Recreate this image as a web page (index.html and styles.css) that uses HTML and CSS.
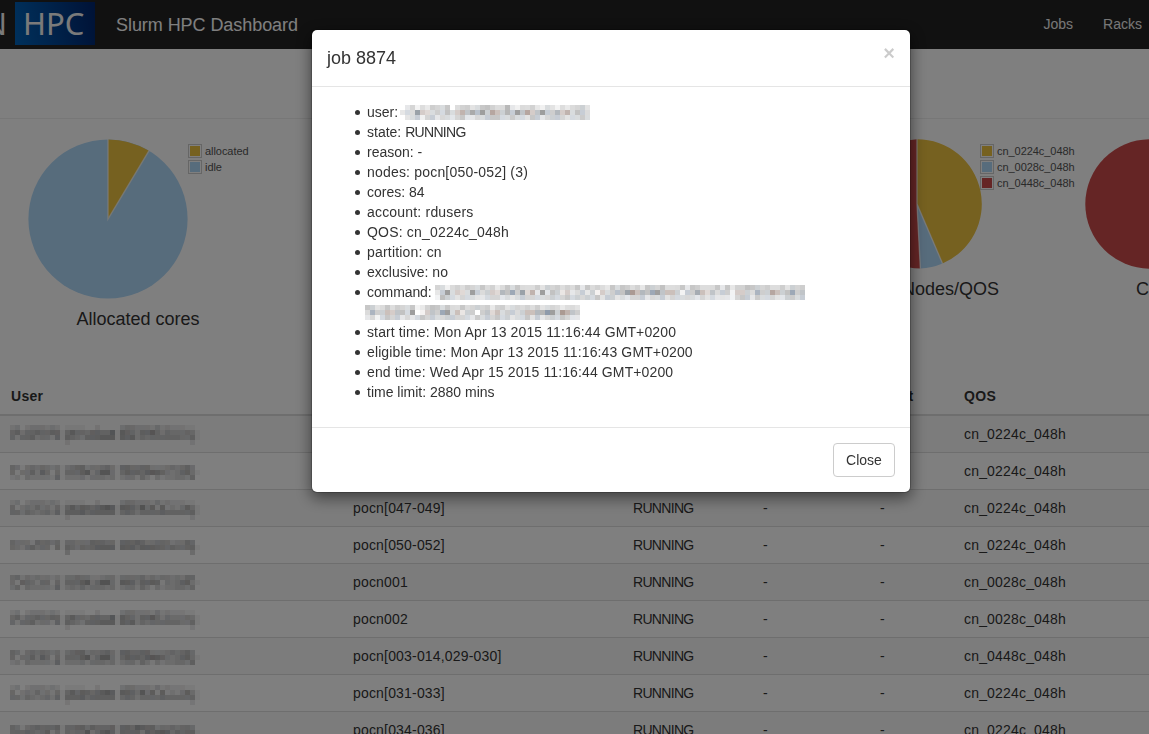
FILE: index.html
```html
<!DOCTYPE html>
<html lang="en">
<head>
<meta charset="utf-8">
<title>Slurm HPC Dashboard</title>
<link rel="stylesheet" href="styles.css">
</head>
<body>
<nav class="navbar">
  <div class="logo"><span class="logo-lead">N</span><span class="logo-box">HPC</span></div>
  <span class="brand">Slurm HPC Dashboard</span>
  <div class="links"><a>Jobs</a><a>Racks</a></div>
</nav>
<div class="toolbar"></div>
<section class="charts">
  <div class="chart chart-cores">
    <div class="plot">
      <svg width="160" height="160" viewBox="-80 -80 160 160">
        <circle r="79.6" fill="#afd8f8"/>
        <path d="M0 0V-79.6A79.6 79.6 0 0 1 41 -68.2Z" fill="#edc240"/>
        <path d="M0 -80V0L41.2 -68.6" class="slice-line"/>
      </svg>
      <ul class="legend">
        <li><i class="swatch yellow"></i>allocated</li>
        <li><i class="swatch blue"></i>idle</li>
      </ul>
    </div>
    <h4>Allocated cores</h4>
  </div>
  <div class="chart chart-nodes">
    <div class="plot">
      <svg width="130" height="130" viewBox="-65 -65 130 130">
        <path d="M0 0L3.4 64.6A64.7 64.7 0 0 1 0 -64.7Z" fill="#cb4b4b"/>
        <path d="M0 0V-64.7A64.7 64.7 0 0 1 25.5 59.5Z" fill="#edc240"/>
        <path d="M0 0L25.5 59.5A64.7 64.7 0 0 1 3.4 64.6Z" fill="#afd8f8"/>
        <path d="M0 -65V0L25.6 59.7M0 0L3.4 64.9" class="slice-line"/>
      </svg>
      <ul class="legend">
        <li><i class="swatch yellow"></i>cn_0224c_048h</li>
        <li><i class="swatch blue"></i>cn_0028c_048h</li>
        <li><i class="swatch red"></i>cn_0448c_048h</li>
      </ul>
    </div>
    <h4>Nodes/QOS</h4>
  </div>
  <div class="chart chart-qos">
    <div class="plot">
      <svg width="130" height="130" viewBox="-65 -65 130 130"><circle r="64.7" fill="#cb4b4b"/></svg>
    </div>
    <h4>Cores/QOS</h4>
  </div>
</section>
<section class="jobs">
  <div class="row head"><b>User</b><b></b><b></b><b></b><b class="start">Start</b><b>QOS</b></div>
  <div class="row odd"><svg class="mosaic m9" data-m="a"></svg><span></span><span></span><span></span><span></span><span>cn_0224c_048h</span></div>
  <div class="row"><svg class="mosaic m12" data-m="b"></svg><span></span><span></span><span></span><span></span><span>cn_0224c_048h</span></div>
  <div class="row odd"><svg class="mosaic m10" data-m="c"></svg><span>pocn[047-049]</span><span class="state">RUNNING</span><span>-</span><span>-</span><span>cn_0224c_048h</span></div>
  <div class="row"><svg class="mosaic m13" data-m="d"></svg><span>pocn[050-052]</span><span class="state">RUNNING</span><span>-</span><span>-</span><span>cn_0224c_048h</span></div>
  <div class="row odd"><svg class="mosaic m11" data-m="e"></svg><span>pocn001</span><span class="state">RUNNING</span><span>-</span><span>-</span><span>cn_0028c_048h</span></div>
  <div class="row"><svg class="mosaic m9" data-m="a"></svg><span>pocn002</span><span class="state">RUNNING</span><span>-</span><span>-</span><span>cn_0028c_048h</span></div>
  <div class="row odd"><svg class="mosaic m12" data-m="b"></svg><span>pocn[003-014,029-030]</span><span class="state">RUNNING</span><span>-</span><span>-</span><span>cn_0448c_048h</span></div>
  <div class="row"><svg class="mosaic m10" data-m="c"></svg><span>pocn[031-033]</span><span class="state">RUNNING</span><span>-</span><span>-</span><span>cn_0224c_048h</span></div>
  <div class="row odd"><svg class="mosaic m13" data-m="f"></svg><span>pocn[034-036]</span><span class="state">RUNNING</span><span>-</span><span>-</span><span>cn_0224c_048h</span></div>
</section>
<div class="backdrop">
  <div class="modal">
    <header><h4>job 8874</h4><button class="dismiss">×</button></header>
    <ul class="details">
      <li class="masked"><span class="label-user">user:</span><svg class="mosaic" data-m="user"></svg></li>
      <li>state: <span class="state">RUNNING</span></li>
      <li>reason: -</li>
      <li class="wide">nodes: pocn[050-052] (3)</li>
      <li>cores: 84</li>
      <li class="wide">account: rdusers</li>
      <li class="wide">QOS: cn_0224c_048h</li>
      <li class="wide">partition: cn</li>
      <li>exclusive: no</li>
      <li class="masked"><span class="label-command">command:</span><svg class="mosaic" data-m="cmd1"></svg></li>
      <li class="masked continued"><svg class="mosaic" data-m="cmd2"></svg></li>
      <li class="time">start time: Mon Apr 13 2015 11:16:44 GMT+0200</li>
      <li class="time">eligible time: Mon Apr 13 2015 11:16:43 GMT+0200</li>
      <li class="time">end time: Wed Apr 15 2015 11:16:44 GMT+0200</li>
      <li>time limit: 2880 mins</li>
    </ul>
    <footer><button class="close">Close</button></footer>
  </div>
</div>
<script src="mosaic.js"></script>
</body>
</html>
```

FILE: styles.css
```css
* { box-sizing: border-box; }
html, body { height: 100%; }
body { margin: 0; overflow: hidden; background: #fff; color: #333; font: 14px/20px "Liberation Sans", Arial, sans-serif; }
ul { list-style: none; margin: 0; padding: 0; }
h4 { margin: 0; font-size: 18px; font-weight: 400; line-height: 20px; }
svg { display: block; flex: none; }

.navbar { display: flex; height: 49px; background: #222; color: #fff; }
.logo { display: flex; width: 95px; height: 43px; margin-top: 2px; justify-content: flex-end; font: 31px/43px "Noto Sans", sans-serif; color: #f4f4f4; }
.logo-lead { margin-right: 8px; }
.logo-box { flex: none; width: 80px; padding-left: 8px; background: linear-gradient(80deg, #0062b8, #00246c); }
.brand { margin-left: 21px; font-size: 18px; line-height: 50px; letter-spacing: -.06px; color: #fff; }
.links { display: flex; gap: 30px; margin-left: auto; padding-right: 7px; line-height: 48px; color: #eee; }
.toolbar { height: 70px; border-bottom: 1px solid #eee; }

.charts { display: flex; height: 257px; padding-top: 20px; overflow: hidden; }
.chart { flex: none; }
.chart-cores { width: 276px; }
.chart-cores .plot { padding-left: 28px; }
.chart-nodes { width: 198px; margin-left: 576px; }
.chart-qos { width: 195px; margin-left: 35px; }
.chart h4 { margin-top: 10px; text-align: center; }
.chart-nodes h4 { padding-right: 1px; }
.plot { display: flex; }
.slice-line { fill: none; stroke: #fff; stroke-opacity: .7; stroke-width: 1.4; }
.legend { flex: none; padding-top: 5px; font-size: 11px; line-height: 14px; letter-spacing: -.05px; color: #545454; }
.chart-nodes .legend { margin-left: -2px; }
.legend li { display: flex; gap: 3px; margin-bottom: 2px; height: 14px; }
.swatch { width: 14px; height: 14px; border: 1px solid #ccc; padding: 1px; background-clip: content-box; }
.yellow { background-color: #edc240; }
.blue { background-color: #afd8f8; }
.red { background-color: #cb4b4b; }

.row { display: grid; grid-template-columns: 343px 280px 130px 117px 84px 1fr; height: 37px; padding-left: 10px; border-bottom: 1px solid #ddd; line-height: 36px; letter-spacing: .18px; }
.row.odd { background: #f9f9f9; }
.row.head { height: 40px; padding-left: 11px; grid-template-columns: 342px 280px 130px 117px 84px 1fr; border-bottom: 2px solid #ddd; line-height: 40px; letter-spacing: .3px; }
.state, .row .state { letter-spacing: -.68px; }
.m9 { margin-top: 9px; }
.m10 { margin-top: 10px; }
.m11 { margin-top: 11px; }
.m12 { margin-top: 12px; }
.m13 { margin-top: 13px; }

.backdrop { position: fixed; inset: 0; padding-top: 29px; background: rgba(0, 0, 0, .5); }
.modal { width: 600px; margin-left: 311px; background: #fff; background-clip: padding-box; border: 1px solid rgba(0, 0, 0, .2); border-radius: 6px; box-shadow: 0 5px 15px rgba(0, 0, 0, .5); }
.modal header { display: flex; justify-content: space-between; height: 57px; padding: 15px 15px 0; border-bottom: 1px solid #e5e5e5; }
.modal header h4 { line-height: 26px; }
.dismiss { align-self: flex-start; margin-top: -2px; padding: 0; border: 0; background: none; color: #000; opacity: .2; font: bold 20px/20px "Liberation Sans", Arial, sans-serif; text-shadow: 0 1px 0 #fff; }
.details { height: 340px; padding: 15px 15px 0 55px; }
.details li { position: relative; height: 20px; }
.details li:not(.continued)::before { content: ""; position: absolute; left: -12px; top: 8px; width: 5px; height: 5px; border-radius: 50%; background: #333; }
.details .wide { letter-spacing: .19px; }
.details .time { letter-spacing: .12px; }
.masked { display: flex; }
.masked .mosaic { margin-top: 3px; }
.label-user { width: 33px; }
.label-command { width: 68px; letter-spacing: -.1px; }
.masked.continued { margin-left: -2px; }
.modal footer { display: flex; justify-content: flex-end; height: 65px; padding: 15px 15px 0; border-top: 1px solid #e5e5e5; }
.close { width: 62px; height: 34px; padding: 0; border: 1px solid #ccc; border-radius: 4px; background: #fff; color: #333; font: 14px/20px "Liberation Sans", Arial, sans-serif; }
```

FILE: mosaic.js
```js
// Each digit is the darkness of one 5px cell in a redacted name or path.
const rows = {
  a: ["2302333232 1111002000 344333242322211",
      "56355655661575546655817653668535444541",
      "52556344261654366677717673545555554461",
      "           2                        2"],
  b: ["5414545434145663445641665566333454564",
      "51446375151555783588415766578764346741",
      "2314333326133342444341344253142334436"],
  c: ["2302333232 1111002000 344333242322211",
      "51343534251575765678717764847272324741",
      "55354345361666756666615653555565555561",
      "           2                        2"],
  d: ["5444265545155444666551666764455534465",
      "54356455161654656777717775777665655661",
      "           4                        4"],
  e: ["4524343323144544223441444453434434355",
      "41654255151555783588417763667614346731",
      "3514333326134353444341344253142334435"],
  f: ["5414565556155664655561665876634454554",
      "55565457251545583578616666376787465661",
      "3343333434134443444451454434434434445"],
  user: ["02313243340344234543352133421321323342",
         "23384334353465758475464857458446463543",
         "02341342332342233444334332442344323343"],
  cmd1: ["33134343343423434333424343434243432434434244353334244333424244544343342434",
         "24834338434436574836282542423424143455885657855541447535344144436447545745",
         "15432333223332323433333433434343424423233423342333332323222134424333224434"],
  cmd2: ["4423534334124543433533434244233343423332332",
         "3644545538014547835244045353443455668848654",
         "2313434232343433443332434343423342423434322"]
};
const tints = ["#000", "#0c1018", "#000", "#180c08", "#000", "#101010", "#000818"];
const lightTints = ["#000", "#333", "#001c40", "#222", "#401808", "#111", "#182838"];
for (const svg of document.querySelectorAll(".mosaic")) {
  const key = svg.dataset.m, data = rows[key], large = key.length > 1;
  const cols = Math.max(...data.map(r => r.length));
  svg.setAttribute("width", cols * 5);
  svg.setAttribute("height", data.length * 5);
  svg.setAttribute("shape-rendering", "crispEdges");
  svg.innerHTML = data.map((line, y) => [...line].map((c, x) => {
    if (c === " " || c === "0") return "";
    const palette = large ? lightTints : tints;
    const fill = palette[(x * 5 + y * 3 + (x * x) % 7) % 7];
    return `<rect x="${x * 5}" y="${y * 5}" width="5" height="5" fill="${fill}" fill-opacity="${(c * (large ? .055 : .042)).toFixed(3)}"/>`;
  }).join("")).join("");
}
```
